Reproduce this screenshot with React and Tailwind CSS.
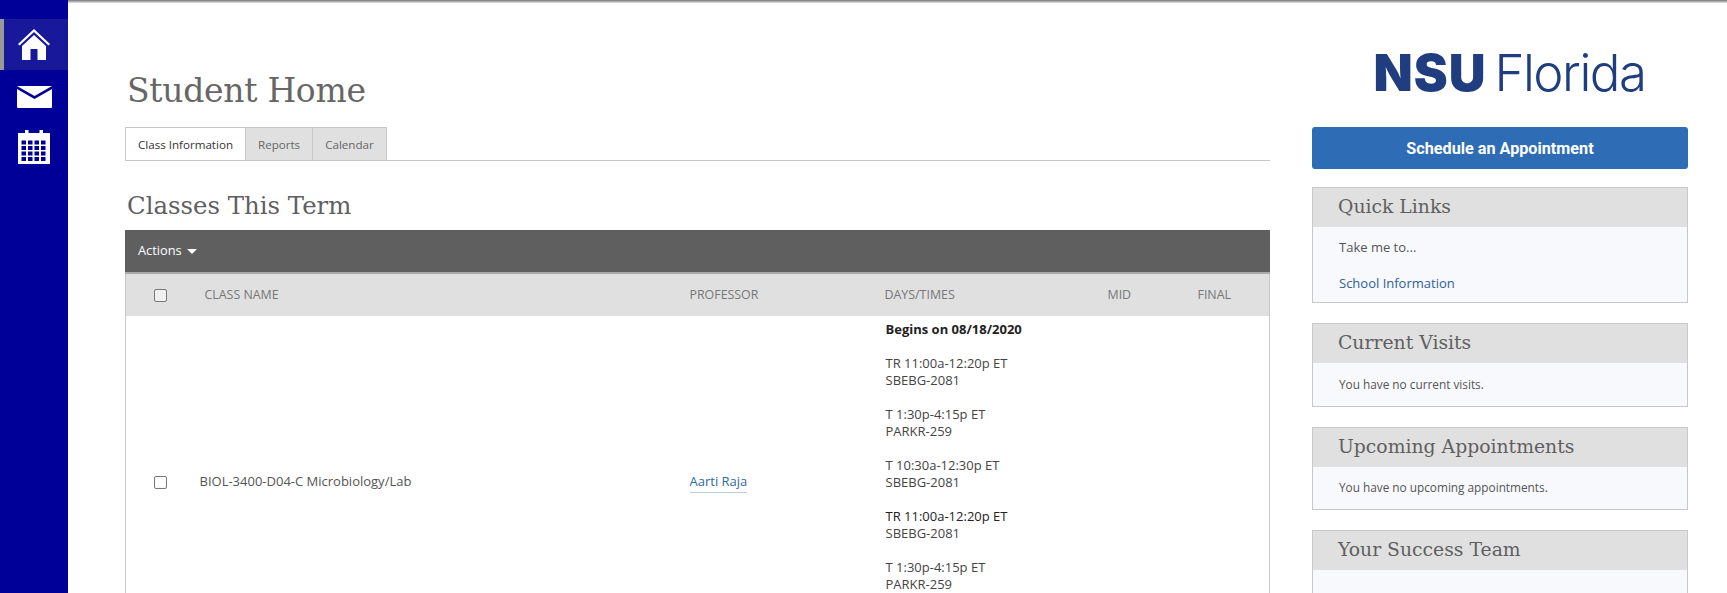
import React from "react";

const slab = "font-['Roboto_Slab','DejaVu_Serif','Liberation_Serif',serif]";

function HomeIcon() {
    return (
        <svg width="34" height="34" viewBox="0 0 34 34" fill="#fff">
            <path d="M17 1 L33 16 L31.5 17.5 L17 4 L2.500 17.500 L1 16 Z" />
            <path d="M17 7 L29 18 V32 H20.500 V21 H13.500 V32 H5 V18 Z" />
        </svg>
    );
}

function MailIcon() {
    return (
        <svg width="35" height="22" viewBox="0 0 35 22" fill="#fff">
            <path d="M0 0 H35 L17.500 10 Z" />
            <path d="M0 3 L17.500 13 L35 3 V21 Q35 22 34 22 H1 Q0 22 0 21 Z" />
        </svg>
    );
}

function CalendarIcon() {
    const cells = [];
    for (let r = 0; r < 4; r++) {
        for (let c = 0; c < 4; c++) {
            cells.push(<rect key={r + "-" + c} x={3.500 + c * 6.500} y={10.500 + r * 5.500} width="4.500" height="4" fill="#000099" />);
        }
    }
    return (
        <svg width="32" height="34" viewBox="0 0 32 34" fill="#fff">
            <rect x="7" y="0" width="3.500" height="6" />
            <rect x="21.500" y="0" width="3.500" height="6" />
            <rect x="0" y="3" width="32" height="31" />
            {cells}
        </svg>
    );
}

function Panel({ title, children }) {
    return (
        <div className="border border-[#c8c8c8] bg-[#f8f9fc]">
            <h3 className={`h-[39px] bg-[#e0e0e0] pl-[25px] text-[18.800px] leading-[38px] text-[#5f5f5f] ${slab}`}>{title}</h3>
            <div className="pl-[26px] pr-[20px] text-[11.800px] text-[#555]">{children}</div>
        </div>
    );
}

const schedule = [
    ["TR 11:00a-12:20p ET", "SBEBG-2081"],
    ["T 1:30p-4:15p ET", "PARKR-259"],
    ["T 10:30a-12:30p ET", "SBEBG-2081"],
    ["TR 11:00a-12:20p ET", "SBEBG-2081"],
    ["T 1:30p-4:15p ET", "PARKR-259"],
];

export default function App() {
    return (
        <div className="relative flex h-[593px] w-[1727px] overflow-hidden bg-white font-['Open_Sans',sans-serif]">
            <div className="absolute inset-x-0 top-0 left-[68px] h-[3px] bg-gradient-to-b from-[#777] to-[#e8e8e8]" />

            <nav className="flex w-[68px] shrink-0 flex-col items-center bg-[#000099] pt-[19px]">
                <div className="flex h-[51px] w-full items-center justify-center border-l-4 border-[#999] bg-[#18189a] pr-[4px]">
                    <HomeIcon />
                </div>
                <div className="mt-[16px]"><MailIcon /></div>
                <div className="mt-[22px]"><CalendarIcon /></div>
            </nav>

            <main className="ml-[57px] w-[1145px] shrink-0 pt-[64px]">
                <h1 className={`h-[63px] pl-[2px] text-[33px] leading-[54px] font-light tracking-[-0.3px] text-[#666] ${slab}`}>Student Home</h1>

                <div className="flex h-[34px] border-b border-[#c8c8c8] text-[11.600px] leading-[34px]">
                    <div className="h-[33px] border-x border-t border-[#c8c8c8] bg-white px-[12px] text-[#333]">Class Information</div>
                    <div className="h-[33px] border-t border-r border-[#c8c8c8] bg-[#e0e0e0] px-[12px] text-[#666]">Reports</div>
                    <div className="h-[33px] border-t border-r border-[#c8c8c8] bg-[#e0e0e0] px-[12px] text-[#666]">Calendar</div>
                </div>

                <h2 className={`mt-[26px] h-[43px] pl-[2px] text-[24.400px] leading-[38px] text-[#5f5f5f] ${slab}`}>Classes This Term</h2>

                <div className="flex h-[44px] items-center border-b-2 border-[#aaa] bg-[#5f5f5f] pl-[13px] text-[12.800px] text-white">
                    Actions
                    <span className="ml-[5px] mt-[1px] border-x-[5px] border-t-[5px] border-x-transparent border-t-white" />
                </div>

                <table className="w-full table-fixed border-x border-[#c8c8c8] text-[13px] text-[#555]">
                    <colgroup>
                        <col className="w-[74px]" />
                        <col className="w-[489px]" />
                        <col className="w-[195px]" />
                        <col className="w-[224px]" />
                        <col className="w-[90px]" />
                        <col />
                    </colgroup>
                    <thead>
                        <tr className="h-[42px] bg-[#e0e0e0] text-left text-[12.400px] text-[#777]">
                            <th className="pl-[28px] font-normal"><span className="block h-[13px] w-[13px] rounded-[2px] border border-[#777] bg-[#f0f0f0]" /></th>
                            <th className="pl-[5px] font-normal">CLASS NAME</th>
                            <th className="pl-[1px] font-normal">PROFESSOR</th>
                            <th className="pl-[1px] font-normal">DAYS/TIMES</th>
                            <th className="font-normal">MID</th>
                            <th className="font-normal">FINAL</th>
                        </tr>
                    </thead>
                    <tbody>
                        <tr className="h-[332px]">
                            <td className="pl-[28px]"><span className="block h-[13px] w-[13px] rounded-[2px] border border-[#777] bg-white" /></td>
                            <td>BIOL-3400-D04-C Microbiology/Lab</td>
                            <td className="pl-[1px]">
                                <a className="border-b border-[#b9cfe0] pb-[2px] text-[#2f6a9f]">Aarti Raja</a>
                            </td>
                            <td className="pt-[5px] pl-[2px] align-top leading-[17px] text-[#444]">
                                <div className="font-bold text-[#222]">Begins on 08/18/2020</div>
                                {schedule.map((item, i) => (
                                    <div key={i} className="mt-[17px]">
                                        <div className={i === 3 ? "text-[#222]" : ""}>{item[0]}</div>
                                        <div>{item[1]}</div>
                                    </div>
                                ))}
                            </td>
                            <td />
                            <td />
                        </tr>
                    </tbody>
                </table>
            </main>

            <aside className="ml-[42px] w-[376px] shrink-0 pt-[50px]">
                <div className="flex h-[45px] items-center justify-center whitespace-nowrap pl-[19px] text-[#1f3d7f]">
                    <span className="font-['Inter',sans-serif] text-[51px] leading-none font-black tracking-[1px]">NSU</span>
                    <span className="ml-[8px] font-['Inter',sans-serif] text-[51px] leading-none font-light tracking-[-1.5px]">Florida</span>
                </div>

                <button className="mt-[32px] block h-[42px] w-full rounded-[3px] bg-[#2e6db5] pt-[2px] font-['Roboto',sans-serif] text-[16.200px] font-bold text-white">
                    Schedule an Appointment
                </button>

                <div className="mt-[18px] flex flex-col gap-[20px]">
                    <Panel title="Quick Links">
                        <p className="pt-[12px] text-[13px] leading-[17px]">Take me to...</p>
                        <p className="pt-[19px] pb-[10px] text-[13px] leading-[17px] text-[#2f6097]">School Information</p>
                    </Panel>
                    <Panel title="Current Visits">
                        <p className="h-[43px] pt-[13px] leading-[17px]">You have no current visits.</p>
                    </Panel>
                    <Panel title="Upcoming Appointments">
                        <p className="h-[42px] pt-[12px] leading-[17px]">You have no upcoming appointments.</p>
                    </Panel>
                    <Panel title="Your Success Team">
                        <div className="h-[60px]" />
                    </Panel>
                </div>
            </aside>
        </div>
    );
}
